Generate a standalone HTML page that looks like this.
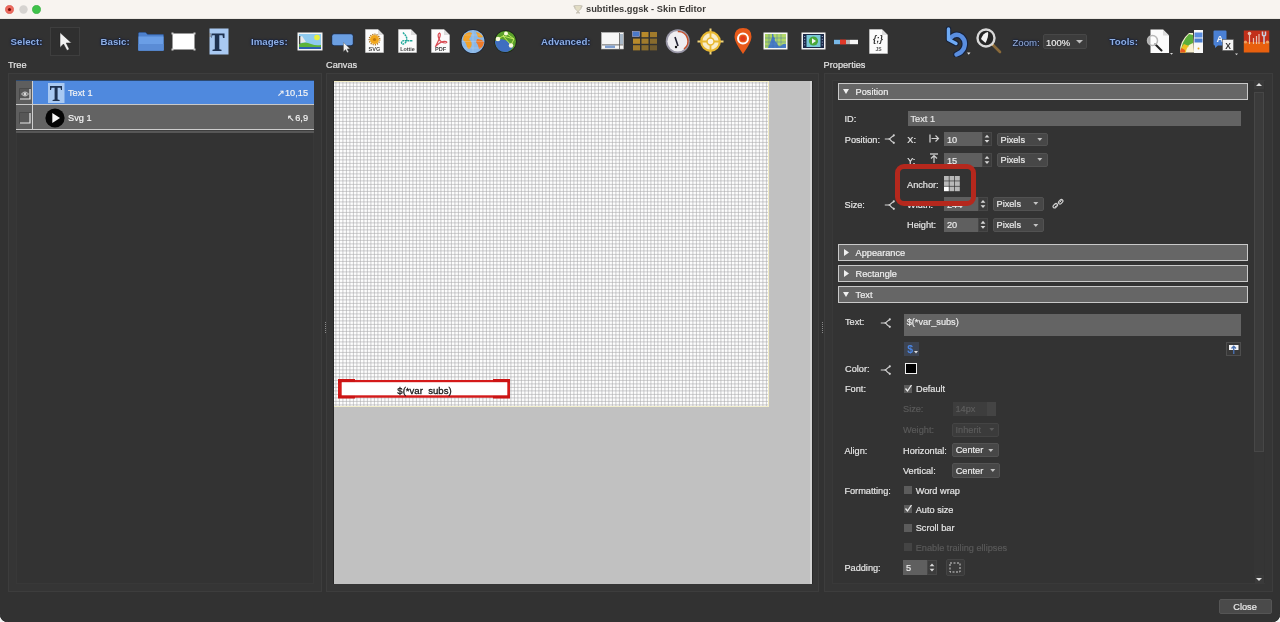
<!DOCTYPE html>
<html><head><meta charset="utf-8"><style>
html,body{margin:0;padding:0;}
body{width:1280px;height:622px;overflow:hidden;position:relative;background:#323232;font-family:"Liberation Sans", sans-serif;}
div.n{-webkit-text-stroke:0.18px currentColor;}
</style></head><body><div style="position:absolute;left:0;top:0;width:1280px;height:622px;will-change:transform;">
<div style="position:absolute;left:0px;top:0px;width:1280px;height:19px;background:#f8f4f0"></div>
<svg style="position:absolute;left:5px;top:5px" width="9" height="9" viewBox="0 0 9 9"><circle cx="4.5" cy="4.5" r="4.2" fill="#ed6a5e" stroke="#d9544a" stroke-width="0.5"/><circle cx="4.5" cy="4.5" r="1.6" fill="#7a0c08"/></svg>
<svg style="position:absolute;left:18.5px;top:5px" width="9" height="9" viewBox="0 0 9 9"><circle cx="4.5" cy="4.5" r="4.2" fill="#d6d3d0"/></svg>
<svg style="position:absolute;left:32px;top:5px" width="9" height="9" viewBox="0 0 9 9"><circle cx="4.5" cy="4.5" r="4.2" fill="#3fc24a" stroke="#2ea83a" stroke-width="0.5"/></svg>
<svg style="position:absolute;left:572px;top:4px" width="12" height="10" viewBox="0 0 12 10"><path d="M2.5 1.5 L9.5 1.5 L9 4.5 Q8 6.5 6.5 6.8 L6.5 8.5 L8 9 L4 9 L5.5 8.5 L5.5 6.8 Q4 6.5 3 4.5 Z" fill="#e2dcc4" stroke="#b8b4a8" stroke-width="0.6"/><path d="M1 2 L2.5 2.5 L3 4.5 M11 2 L9.5 2.5 L9 4.5" stroke="#b8b4a8" stroke-width="0.6" fill="none"/></svg>
<div style="position:absolute;left:0px;top:17.5px;width:1280px;height:1.5px;background:#ebe7e2"></div>
<div style="position:absolute;left:586px;top:5.43px;font-size:9.3px;line-height:9.3px;color:#3c3a38;font-weight:bold;white-space:nowrap;">subtitles.ggsk - Skin Editor</div>
<div style="position:absolute;left:10.6px;top:37.49px;font-size:9.7px;line-height:9.7px;color:#8eaee2;font-weight:bold;white-space:nowrap;text-shadow:0 0 1px #0a1c46,0 0 1.5px #0a1c46,0 0 2.5px #0a1c46;">Select:</div>
<div style="position:absolute;left:50px;top:27px;width:30px;height:29px;box-sizing:border-box;border:1px solid #3e3e3e;background:#2f2f2f"></div>
<svg style="position:absolute;left:58px;top:31px" width="16" height="21" viewBox="0 0 16 21"><path d="M2 1.5 L2 16.5 L5.5 13 L9 19.5 L11.3 18.3 L8.2 12 L13.5 12 Z" fill="#f2f2f2" stroke="#222" stroke-width="0.5"/></svg>
<div style="position:absolute;left:100.6px;top:37.49px;font-size:9.7px;line-height:9.7px;color:#8eaee2;font-weight:bold;white-space:nowrap;text-shadow:0 0 1px #0a1c46,0 0 1.5px #0a1c46,0 0 2.5px #0a1c46;">Basic:</div>
<div style="position:absolute;left:251px;top:37.49px;font-size:9.7px;line-height:9.7px;color:#8eaee2;font-weight:bold;white-space:nowrap;text-shadow:0 0 1px #0a1c46,0 0 1.5px #0a1c46,0 0 2.5px #0a1c46;">Images:</div>
<div style="position:absolute;left:541px;top:37.49px;font-size:9.7px;line-height:9.7px;color:#8eaee2;font-weight:bold;white-space:nowrap;text-shadow:0 0 1px #0a1c46,0 0 1.5px #0a1c46,0 0 2.5px #0a1c46;">Advanced:</div>
<div style="position:absolute;left:1012.5px;top:37.67px;font-size:9.6px;line-height:9.6px;color:#9cb2da;font-weight:bold;white-space:nowrap;font-weight:normal;text-shadow:0 0 1px #0a1c46,0 0 1.5px #0a1c46,0 0 2.5px #0a1c46;">Zoom:</div>
<div style="position:absolute;left:1109.6px;top:37.49px;font-size:9.7px;line-height:9.7px;color:#8eaee2;font-weight:bold;white-space:nowrap;text-shadow:0 0 1px #0a1c46,0 0 1.5px #0a1c46,0 0 2.5px #0a1c46;">Tools:</div>
<svg style="position:absolute;left:137px;top:31px" width="28" height="21" viewBox="0 0 28 21"><path d="M1 2 Q1 1 2 1 L9 1 L11 3 L26 3 Q27 3 27 4 L27 20 L1 20 Z" fill="#1f3557"/><path d="M1.5 2.5 Q1.5 1.5 2.5 1.5 L8.5 1.5 L10.5 3.5 L26.5 3.5 L26.5 19.5 L1.5 19.5 Z" fill="#4d80cc"/><rect x="1.5" y="5.5" width="25" height="14" fill="#6a9ee6"/><rect x="1.5" y="13" width="25" height="6.5" fill="#5a8cd6"/></svg>
<svg style="position:absolute;left:171px;top:32px" width="25" height="19" viewBox="0 0 25 19"><rect x="1.5" y="1.5" width="22" height="16" fill="#ffffff"/><rect x="0.5" y="0.5" width="2" height="2" fill="#cfcfcf"/><rect x="22.5" y="0.5" width="2" height="2" fill="#cfcfcf"/><rect x="0.5" y="16.5" width="2" height="2" fill="#cfcfcf"/><rect x="22.5" y="16.5" width="2" height="2" fill="#cfcfcf"/></svg>
<svg style="position:absolute;left:209px;top:28px" width="20" height="27" viewBox="0 0 20 27"><rect x="0.5" y="0.5" width="19" height="26" fill="#a9c9f2"/><path d="M2.5 5.5 L15.5 5.5 L15.5 10 L14 10 L13.5 7.3 L10.3 7.3 L10.3 21.3 L12.5 21.8 L12.5 23 L3.5 23 L3.5 21.8 L5.8 21.3 L5.8 7.3 L3.3 7.3 L2.8 10 L2.5 10 Z" fill="#1e3150"/><rect x="0" y="5" width="1.5" height="4" fill="#777"/></svg>
<svg style="position:absolute;left:297px;top:32px" width="26" height="19" viewBox="0 0 26 19"><rect x="0.5" y="0.5" width="25" height="18" fill="#f4f4f4"/><rect x="2" y="2" width="22" height="15" fill="#8fcbef"/><circle cx="20" cy="5.5" r="2.8" fill="#e8f03c"/><path d="M2 12 Q8 9 14 12 Q19 14 24 13 L24 17 L2 17 Z" fill="#5cb33a"/><path d="M2 15 L24 15 L24 17 L2 17 Z" fill="#2d5fb0"/><path d="M3 5 L5 4 L9 10 L3 11 Z" fill="#eaeaea"/><rect x="2" y="4" width="1.3" height="8" fill="#444"/></svg>
<svg style="position:absolute;left:331px;top:33px" width="26" height="20" viewBox="0 0 26 20"><rect x="0.5" y="0.5" width="22" height="12.5" rx="2.5" fill="#1d2f50"/><rect x="1.2" y="1.2" width="20.6" height="11" rx="2" fill="#6b9fe2"/><path d="M12.5 9.5 L12.5 18.5 L14.6 16.6 L16.2 19.6 L17.6 18.9 L16.1 15.9 L19 15.8 Z" fill="#f2f2f2" stroke="#555" stroke-width="0.4"/></svg>
<svg style="position:absolute;left:365px;top:29px" width="19" height="24" viewBox="0 0 19 24"><path d="M0.5 0.5 L13 0.5 L18.5 6 L18.5 23.5 L0.5 23.5 Z" fill="#fbfbfb" stroke="#ddd" stroke-width="0.5"/><path d="M13 0.5 L13 6 L18.5 6 Z" fill="#dcdcdc"/><circle cx="9.5" cy="10.5" r="4.5" fill="#f2a81e"/><circle cx="9.5" cy="10.5" r="5.3" fill="none" stroke="#a86a10" stroke-width="1.2" stroke-dasharray="1.2 1"/><circle cx="9.5" cy="10.5" r="1.6" fill="#c07810"/><text x="9.5" y="21.5" font-size="5.6" font-family="Liberation Sans" font-weight="bold" text-anchor="middle" fill="#444">SVG</text></svg>
<svg style="position:absolute;left:398px;top:29px" width="19" height="24" viewBox="0 0 19 24"><path d="M0.5 0.5 L13 0.5 L18.5 6 L18.5 23.5 L0.5 23.5 Z" fill="#fbfbfb" stroke="#ddd" stroke-width="0.5"/><path d="M13 0.5 L13 6 L18.5 6 Z" fill="#dcdcdc"/><path d="M5 3.5 L8 7 Q10 11 7 14 Q4 16.5 3.5 13.5 Q4 11 8.5 11.8 L15 11.8" stroke="#1fa89a" stroke-width="1.4" fill="none" stroke-dasharray="2 0.6"/><text x="9.5" y="21.5" font-size="5.4" font-family="Liberation Sans" font-weight="bold" text-anchor="middle" fill="#444">Lottie</text></svg>
<svg style="position:absolute;left:431px;top:29px" width="19" height="24" viewBox="0 0 19 24"><path d="M0.5 0.5 L13 0.5 L18.5 6 L18.5 23.5 L0.5 23.5 Z" fill="#fbfbfb" stroke="#ddd" stroke-width="0.5"/><path d="M13 0.5 L13 6 L18.5 6 Z" fill="#dcdcdc"/><path d="M8.5 4 Q6 5 8 10 Q10 14 14.5 14 Q17 13.5 15 12.5 Q11 11.5 6 16 Q3.5 18.5 5 16.5 Q7 13 8.5 9 Q10 5 8.5 4 Z" stroke="#d94a52" stroke-width="1.2" fill="none"/><text x="9.5" y="21.5" font-size="5.6" font-family="Liberation Sans" font-weight="bold" text-anchor="middle" fill="#444">PDF</text></svg>
<svg style="position:absolute;left:460px;top:29px" width="26" height="26" viewBox="0 0 26 26"><circle cx="13" cy="12.5" r="12.3" fill="#1a2030"/><circle cx="13" cy="12.5" r="11.5" fill="#8ab8e8"/><path d="M4 6 Q8 2 12 4 Q11 8 9 10 Q13 13 11 18 Q9 22 7 18 Q6 13 3 11 Z" fill="#f2a22a"/><path d="M16 3 Q21 4 23 8 Q20 9 18 8 Q17 6 16 3 Z" fill="#f2a22a"/><path d="M17 10 Q22 10 24 13 Q23 19 19 20 Q18 15 16 13 Z" fill="#ee7a2a"/><path d="M13 1 L13 24 M2 12.5 L24 12.5 M4 6 L22 6 M4 19 L22 19" stroke="#c8d8f0" stroke-width="0.5" opacity="0.6"/></svg>
<svg style="position:absolute;left:494px;top:30px" width="24" height="24" viewBox="0 0 24 24"><circle cx="11.5" cy="11.5" r="11.2" fill="#1a2218"/><circle cx="11.5" cy="11.5" r="10.5" fill="#5aa02a"/><path d="M1 11 Q6 8 11 10 Q16 12 19 17 Q16 22 11.5 22 Q3 22 1 13 Z" fill="#3f6ec0"/><path d="M2 10 L9 6 L20 9 M9 6 L12 3 M9 6 L17 15 L20 9 M12 3 L20 9" stroke="#c8f060" stroke-width="0.9" fill="none"/><circle cx="12" cy="3.5" r="2" fill="#fafadc"/><circle cx="4" cy="9" r="2.3" fill="#fafadc"/><circle cx="17" cy="15.5" r="2.2" fill="#fafadc"/></svg>
<svg style="position:absolute;left:601px;top:32px" width="23" height="18" viewBox="0 0 23 18"><rect x="0.5" y="0.5" width="22" height="16.5" fill="#f6f6f6" stroke="#bbb" stroke-width="0.6"/><rect x="1" y="12.5" width="21" height="0.8" fill="#444"/><rect x="18" y="1" width="0.8" height="16" fill="#555"/><rect x="19" y="2" width="3" height="10" fill="#a8b8c8"/><rect x="4" y="13.5" width="10" height="2.5" fill="#7f9fd0"/></svg>
<svg style="position:absolute;left:632px;top:31px" width="26" height="20" viewBox="0 0 26 20"><rect x="0.5" y="0.5" width="7" height="5" fill="#4a78c8" stroke="#aac" stroke-width="0.6"/><rect x="9.5" y="1.0" width="7" height="5.2" fill="#d09a2a" opacity="0.85"/><rect x="18.0" y="1.0" width="7" height="5.2" fill="#d09a2a" opacity="0.70"/><rect x="1.0" y="7.6" width="7" height="5.2" fill="#d09a2a" opacity="0.85"/><rect x="9.5" y="7.6" width="7" height="5.2" fill="#d09a2a" opacity="0.70"/><rect x="18.0" y="7.6" width="7" height="5.2" fill="#d09a2a" opacity="0.55"/><rect x="1.0" y="14.2" width="7" height="5.2" fill="#d09a2a" opacity="0.70"/><rect x="9.5" y="14.2" width="7" height="5.2" fill="#d09a2a" opacity="0.55"/><rect x="18.0" y="14.2" width="7" height="5.2" fill="#d09a2a" opacity="0.40"/></svg>
<svg style="position:absolute;left:665px;top:29px" width="26" height="26" viewBox="0 0 26 26"><circle cx="12.75" cy="12.25" r="12" fill="#9a98a8"/><circle cx="12.75" cy="12.25" r="10.3" fill="#efeef2"/><path d="M12.75 2.5 A9.7 9.7 0 0 1 19 20" stroke="#c8502a" stroke-width="1.5" fill="none"/><path d="M10 8 L13 17" stroke="#223" stroke-width="1.6"/><circle cx="11" cy="18" r="1.2" fill="#111"/></svg>
<svg style="position:absolute;left:697px;top:28px" width="27" height="27" viewBox="0 0 27 27"><path d="M13.5 0.5 L13.5 26.5 M0.5 13.5 L26.5 13.5" stroke="#f2d478" stroke-width="2"/><circle cx="13.5" cy="13.5" r="9.3" fill="#f8ecc8" stroke="#e8b830" stroke-width="2.2"/><path d="M13.5 4 L13.5 23 M4 13.5 L23 13.5" stroke="#e8b830" stroke-width="1.8"/><circle cx="13.5" cy="13.5" r="3.5" fill="#fbf2e0" stroke="#e8b830" stroke-width="1.5"/></svg>
<svg style="position:absolute;left:733px;top:27px" width="20" height="28" viewBox="0 0 20 28"><path d="M10 1 Q18.5 1 18.5 10 Q18.5 15 10 27 Q1.5 15 1.5 10 Q1.5 1 10 1 Z" fill="#e85a1a"/><circle cx="10" cy="11.5" r="5" fill="none" stroke="#fdfdfd" stroke-width="2"/><circle cx="10" cy="11.5" r="2.6" fill="#e23a1a"/></svg>
<svg style="position:absolute;left:763px;top:32px" width="25" height="18" viewBox="0 0 25 18"><rect x="0.5" y="0.5" width="24" height="17" fill="#f8f8f8"/><rect x="2" y="2" width="21" height="14" fill="#4a7ec4"/><path d="M2 2 L9 2 Q10 5 8 8 Q7 12 5 16 L2 16 Z" fill="#a8d060"/><path d="M10 2 L23 2 L23 12 Q20 11 18 14 Q15 15 14 11 Q11 9 12 6 Q10 5 10 2 Z" fill="#b2d868"/><path d="M2 6 L23 6 M2 10 L23 10 M2 14 L23 14 M6 2 L6 16 M10 2 L10 16 M14 2 L14 16 M18 2 L18 16" stroke="#3a6ab8" stroke-width="0.6" opacity="0.7"/></svg>
<svg style="position:absolute;left:801px;top:32px" width="25" height="18" viewBox="0 0 25 18"><rect x="0.5" y="0.5" width="24" height="17" fill="#f4f4f4"/><rect x="2" y="2" width="21" height="14" fill="#1c2a48"/><rect x="5.5" y="3" width="14" height="12" fill="#7ac8d8"/><circle cx="12.5" cy="9" r="4.6" fill="#4aa83a"/><path d="M11 6.3 L15 9 L11 11.7 Z" fill="#f6f6f6"/><path d="M3.7 4 L3.7 15 M21.3 4 L21.3 15" stroke="#a8b8e0" stroke-width="1" stroke-dasharray="1 1.8"/></svg>
<svg style="position:absolute;left:833px;top:39px" width="26" height="6" viewBox="0 0 26 6"><rect x="1" y="0.8" width="6" height="4.4" fill="#78b8e8"/><rect x="7" y="0.5" width="6" height="5" fill="#e03828"/><rect x="13" y="0.8" width="4" height="4.4" fill="#b8b8b8"/><rect x="17" y="0.8" width="8" height="4.4" fill="#f6f6f6"/></svg>
<svg style="position:absolute;left:869px;top:29px" width="19" height="25" viewBox="0 0 19 25"><path d="M0.5 0.5 L13 0.5 L18.5 6 L18.5 24.5 L0.5 24.5 Z" fill="#fbfbfb" stroke="#ddd" stroke-width="0.5"/><path d="M13 0.5 L13 6 L18.5 6 Z" fill="#dcdcdc"/><text x="9" y="13" font-size="9" font-family="Liberation Sans" font-weight="bold" font-style="italic" text-anchor="middle" fill="#333">{;}</text><text x="9.5" y="21.5" font-size="5" font-family="Liberation Sans" font-weight="bold" text-anchor="middle" fill="#555">JS</text></svg>
<svg style="position:absolute;left:944px;top:26px" width="30" height="31" viewBox="0 0 30 31"><path d="M6.5 12 Q12 6.5 17.5 10.5 Q22.5 15 20 22 Q18 26.5 12.5 28.5" stroke="#15213a" stroke-width="6.6" fill="none" stroke-linecap="round"/><path d="M4.5 3 L4.5 13.5 L12 17.5" stroke="#15213a" stroke-width="5.4" fill="none" stroke-linecap="round" stroke-linejoin="round"/><path d="M6.5 12 Q12 6.5 17.5 10.5 Q22.5 15 20 22 Q18 26.5 12.5 28.5" stroke="#5a8ee0" stroke-width="4.4" fill="none" stroke-linecap="round"/><path d="M4.5 3 L4.5 13.5 L12 17.5" stroke="#6eaaf4" stroke-width="3.4" fill="none" stroke-linecap="round" stroke-linejoin="round"/><path d="M23 26.5 L26.5 26.5 L24.75 28.8 Z" fill="#e0e0e0"/></svg>
<svg style="position:absolute;left:975px;top:27px" width="30" height="28" viewBox="0 0 30 28"><path d="M16.5 16.5 L25 25" stroke="#8a6a3a" stroke-width="2.6" stroke-linecap="round"/><path d="M15.5 15.5 L18 18" stroke="#e8c890" stroke-width="2.5"/><circle cx="11" cy="11" r="8.5" fill="#262626" stroke="#d8d8d8" stroke-width="2.4"/><path d="M6 12 Q8 6 13 5 Q14 9 10.5 16 Z" fill="#f4f4f4"/></svg>
<div style="position:absolute;left:1043px;top:34px;width:44px;height:15px;box-sizing:border-box;border:1px solid #474747;background:#3c3c3c;border-radius:2px"></div>
<div class="n" style="position:absolute;left:1046px;top:38.14px;font-size:9.4px;line-height:9.4px;color:#ececec;font-weight:normal;white-space:nowrap;">100%</div>
<svg style="position:absolute;left:1076px;top:40px" width="7" height="4" viewBox="0 0 7 4"><path d="M0 0 L7 0 L3.5 3.5 Z" fill="#bdbdbd"/></svg>
<svg style="position:absolute;left:1145px;top:29px" width="28" height="26" viewBox="0 0 28 26"><path d="M5.5 0.5 L18 0.5 L24 6.5 L24 24 L5.5 24 Z" fill="#fbfbfb"/><path d="M18 0.5 L18 6.5 L24 6.5 Z" fill="#dcdcdc"/><path d="M10 15 L16.5 21.5" stroke="#222" stroke-width="2" stroke-linecap="round"/><circle cx="7.5" cy="11.5" r="5" fill="rgba(255,255,255,0.6)" stroke="#b8b8b8" stroke-width="1.5"/><path d="M25 24 L28 24 L26.5 25.8 Z" fill="#d8d8d8"/></svg>
<svg style="position:absolute;left:1179px;top:29px" width="25" height="25" viewBox="0 0 25 25"><rect x="15" y="1" width="9" height="23" fill="#f8f8f8"/><rect x="15.5" y="3.5" width="8" height="5" fill="#5a8ee0"/><rect x="15.5" y="9.5" width="8" height="4" fill="#4a7ed0"/><circle cx="19.5" cy="19.5" r="1" fill="#e8a020"/><path d="M1 23.5 Q0.5 12 10 4 L14 4 L15 23.5 Z" fill="#f8f0d0"/><path d="M2 23.5 Q2 13 10 5 L14 6 L14 14 Q6 17 6 23.5 Z" fill="#5cae3a"/><path d="M1.5 23.5 Q2 18 5 15 L10 17 Q7 19 7 23.5 Z" fill="#f0c020"/><path d="M1 23.5 Q1 21 2.5 19 L6 21 L6 23.5 Z" fill="#e85a20"/></svg>
<svg style="position:absolute;left:1212px;top:30px" width="27" height="26" viewBox="0 0 27 26"><path d="M1.5 1.5 Q1.5 0.5 2.5 0.5 L13.5 0.5 Q14.5 0.5 14.5 1.5 L14.5 14 Q14.5 15.5 13 15.5 L6 15.5 L3 18 L3 15.5 Q1.5 15.5 1.5 14 Z" fill="#4a80d4"/><text x="8" y="11.5" font-size="9.5" font-family="Liberation Sans" font-weight="bold" text-anchor="middle" fill="#f4f4f4">A</text><rect x="10.5" y="9.5" width="11" height="11" fill="#f4f4f4" stroke="#555" stroke-width="0.6"/><text x="16" y="19" font-size="8.5" font-family="Liberation Sans" font-weight="bold" text-anchor="middle" fill="#333">X</text><path d="M23 23.5 L26 23.5 L24.5 25.3 Z" fill="#d8d8d8"/></svg>
<svg style="position:absolute;left:1243px;top:30px" width="27" height="23" viewBox="0 0 27 23"><rect x="0.8" y="0.5" width="25.5" height="12" fill="#c2301a"/><rect x="0.8" y="12" width="25.5" height="10.5" fill="#e8600e"/><path d="M6.5 3 L6.5 14 M10.5 8 L10.5 14 M13.5 6 L13.5 14 M16 4 L16 14" stroke="#e8c0b0" stroke-width="1.2"/><circle cx="6.5" cy="3.5" r="1.8" fill="#e8c0b0"/><path d="M19.5 1.5 L19.5 5 Q21 7 22.5 5 L22.5 1.5 M21 6 L21 14" stroke="#c8d0e0" stroke-width="1.5" fill="none"/><circle cx="2.5" cy="12" r="1.6" fill="#f0a060"/><circle cx="24.5" cy="12" r="1.6" fill="#f0a060"/></svg>
<div class="n" style="position:absolute;left:8px;top:61.21px;font-size:9.2px;line-height:9.2px;color:#e6e6e6;font-weight:normal;white-space:nowrap;">Tree</div>
<div class="n" style="position:absolute;left:326px;top:61.21px;font-size:9.2px;line-height:9.2px;color:#e6e6e6;font-weight:normal;white-space:nowrap;">Canvas</div>
<div class="n" style="position:absolute;left:823.6px;top:61.21px;font-size:9.2px;line-height:9.2px;color:#e6e6e6;font-weight:normal;white-space:nowrap;">Properties</div>
<div style="position:absolute;left:8px;top:73px;width:314px;height:519px;box-sizing:border-box;border:1px solid #3d3d3d;background:#353535;"></div>
<div style="position:absolute;left:326px;top:73px;width:493px;height:519px;box-sizing:border-box;border:1px solid #3d3d3d;background:#353535;"></div>
<div style="position:absolute;left:824px;top:73px;width:449px;height:519px;box-sizing:border-box;border:1px solid #3d3d3d;background:#353535;"></div>
<div style="position:absolute;left:16px;top:80px;width:298px;height:504px;box-sizing:border-box;border:1px solid #383838;background:#333333"></div>
<div style="position:absolute;left:832px;top:80px;width:433px;height:504px;box-sizing:border-box;border:1px solid #393939;border-right:none;background:#333333"></div>
<div style="position:absolute;left:16px;top:80px;width:298px;height:1px;background:#2c4a72"></div>
<div style="position:absolute;left:16px;top:81px;width:298px;height:23px;background:#4f89de"></div>
<div style="position:absolute;left:16px;top:81px;width:16px;height:23px;background:#5e5e5e"></div>
<div style="position:absolute;left:16px;top:105px;width:298px;height:24px;background:#636363"></div>
<div style="position:absolute;left:16px;top:105px;width:16px;height:24px;background:#5e5e5e"></div>
<div style="position:absolute;left:16px;top:104px;width:298px;height:1px;background:#c9c9c9"></div>
<div style="position:absolute;left:16px;top:129px;width:298px;height:1px;background:#cdcdcd"></div>
<div style="position:absolute;left:16px;top:130px;width:298px;height:1px;background:#3e3e3e"></div>
<div style="position:absolute;left:16px;top:131px;width:298px;height:2px;background:#575757"></div>
<div style="position:absolute;left:32px;top:81px;width:1px;height:48px;background:#d0d0d0"></div>
<div class="n" style="position:absolute;left:68px;top:89.41px;font-size:9.2px;line-height:9.2px;color:#f4f4f4;font-weight:normal;white-space:nowrap;">Text 1</div>
<div class="n" style="position:absolute;right:972px;top:89.41px;font-size:9.2px;line-height:9.2px;color:#f4f4f4;font-weight:normal;white-space:nowrap;">&#8599;10,15</div>
<div class="n" style="position:absolute;left:68px;top:113.61px;font-size:9.2px;line-height:9.2px;color:#f4f4f4;font-weight:normal;white-space:nowrap;">Svg 1</div>
<div class="n" style="position:absolute;right:972px;top:113.61px;font-size:9.2px;line-height:9.2px;color:#f4f4f4;font-weight:normal;white-space:nowrap;">&#8598;6,9</div>
<svg style="position:absolute;left:18.5px;top:87.5px" width="12" height="12" viewBox="0 0 12 12"><rect x="0.5" y="0.5" width="11" height="11" fill="#575757"/><path d="M0.5 11.5 L0.5 0.5 L11.5 0.5" stroke="#4a4a4a" stroke-width="1" fill="none"/><path d="M1 11 L11 11 L11 1" stroke="#e8e8e8" stroke-width="1.2" fill="none"/><path d="M2.5 6 Q6 2 9.5 6 Q6 10 2.5 6 Z" fill="none" stroke="#d8d8d8" stroke-width="0.9"/><circle cx="6" cy="6" r="1.5" fill="#d8d8d8"/></svg>
<svg style="position:absolute;left:18.5px;top:111.5px" width="12" height="12" viewBox="0 0 12 12"><rect x="0.5" y="0.5" width="11" height="11" fill="#575757"/><path d="M0.5 11.5 L0.5 0.5 L11.5 0.5" stroke="#4a4a4a" stroke-width="1" fill="none"/><path d="M1 11 L11 11 L11 1" stroke="#e8e8e8" stroke-width="1.2" fill="none"/></svg>
<svg style="position:absolute;left:48px;top:83px" width="17" height="20" viewBox="0 0 17 20"><rect x="0" y="0" width="16.5" height="20" fill="#a9c9f2"/><path d="M2 3 L14 3 L14 7 L13 7 L12.5 4.8 L9.6 4.8 L9.6 16.5 L11.6 17 L11.6 18 L4.6 18 L4.6 17 L6.6 16.5 L6.6 4.8 L3.5 4.8 L3 7 L2 7 Z" fill="#1e3150"/></svg>
<svg style="position:absolute;left:45px;top:108px" width="20" height="20" viewBox="0 0 20 20"><circle cx="10" cy="10" r="9.6" fill="#050505"/><path d="M7.3 5 L15 10 L7.3 15 Z" fill="#f8f8f8"/></svg>
<div style="position:absolute;left:333px;top:81px;width:1px;height:503px;background:#262626"></div>
<div style="position:absolute;left:812px;top:81px;width:1px;height:503px;background:#282828"></div>
<div style="position:absolute;left:334px;top:81px;width:478px;height:503px;background:#c1c1c1"></div>
<div style="position:absolute;left:810px;top:81px;width:1.8px;height:503px;background:#d2d2d2"></div>
<svg style="position:absolute;left:334px;top:81px" width="435" height="326" viewBox="0 0 435 326"><rect width="435" height="326" fill="#fdfdfd"/><path d="M1.90 0V326M5.40 0V326M8.90 0V326M12.40 0V326M15.90 0V326M19.40 0V326M22.90 0V326M26.40 0V326M29.90 0V326M33.40 0V326M36.90 0V326M40.40 0V326M43.90 0V326M47.40 0V326M50.90 0V326M54.40 0V326M57.90 0V326M61.40 0V326M64.90 0V326M68.40 0V326M71.90 0V326M75.40 0V326M78.90 0V326M82.40 0V326M85.90 0V326M89.40 0V326M92.90 0V326M96.40 0V326M99.90 0V326M103.40 0V326M106.90 0V326M110.40 0V326M113.90 0V326M117.40 0V326M120.90 0V326M124.40 0V326M127.90 0V326M131.40 0V326M134.90 0V326M138.40 0V326M141.90 0V326M145.40 0V326M148.90 0V326M152.40 0V326M155.90 0V326M159.40 0V326M162.90 0V326M166.40 0V326M169.90 0V326M173.40 0V326M176.90 0V326M180.40 0V326M183.90 0V326M187.40 0V326M190.90 0V326M194.40 0V326M197.90 0V326M201.40 0V326M204.90 0V326M208.40 0V326M211.90 0V326M215.40 0V326M218.90 0V326M222.40 0V326M225.90 0V326M229.40 0V326M232.90 0V326M236.40 0V326M239.90 0V326M243.40 0V326M246.90 0V326M250.40 0V326M253.90 0V326M257.40 0V326M260.90 0V326M264.40 0V326M267.90 0V326M271.40 0V326M274.90 0V326M278.40 0V326M281.90 0V326M285.40 0V326M288.90 0V326M292.40 0V326M295.90 0V326M299.40 0V326M302.90 0V326M306.40 0V326M309.90 0V326M313.40 0V326M316.90 0V326M320.40 0V326M323.90 0V326M327.40 0V326M330.90 0V326M334.40 0V326M337.90 0V326M341.40 0V326M344.90 0V326M348.40 0V326M351.90 0V326M355.40 0V326M358.90 0V326M362.40 0V326M365.90 0V326M369.40 0V326M372.90 0V326M376.40 0V326M379.90 0V326M383.40 0V326M386.90 0V326M390.40 0V326M393.90 0V326M397.40 0V326M400.90 0V326M404.40 0V326M407.90 0V326M411.40 0V326M414.90 0V326M418.40 0V326M421.90 0V326M425.40 0V326M428.90 0V326M432.40 0V326M0 1.90H435M0 5.40H435M0 8.90H435M0 12.40H435M0 15.90H435M0 19.40H435M0 22.90H435M0 26.40H435M0 29.90H435M0 33.40H435M0 36.90H435M0 40.40H435M0 43.90H435M0 47.40H435M0 50.90H435M0 54.40H435M0 57.90H435M0 61.40H435M0 64.90H435M0 68.40H435M0 71.90H435M0 75.40H435M0 78.90H435M0 82.40H435M0 85.90H435M0 89.40H435M0 92.90H435M0 96.40H435M0 99.90H435M0 103.40H435M0 106.90H435M0 110.40H435M0 113.90H435M0 117.40H435M0 120.90H435M0 124.40H435M0 127.90H435M0 131.40H435M0 134.90H435M0 138.40H435M0 141.90H435M0 145.40H435M0 148.90H435M0 152.40H435M0 155.90H435M0 159.40H435M0 162.90H435M0 166.40H435M0 169.90H435M0 173.40H435M0 176.90H435M0 180.40H435M0 183.90H435M0 187.40H435M0 190.90H435M0 194.40H435M0 197.90H435M0 201.40H435M0 204.90H435M0 208.40H435M0 211.90H435M0 215.40H435M0 218.90H435M0 222.40H435M0 225.90H435M0 229.40H435M0 232.90H435M0 236.40H435M0 239.90H435M0 243.40H435M0 246.90H435M0 250.40H435M0 253.90H435M0 257.40H435M0 260.90H435M0 264.40H435M0 267.90H435M0 271.40H435M0 274.90H435M0 278.40H435M0 281.90H435M0 285.40H435M0 288.90H435M0 292.40H435M0 295.90H435M0 299.40H435M0 302.90H435M0 306.40H435M0 309.90H435M0 313.40H435M0 316.90H435M0 320.40H435M0 323.90H435" stroke="#a9a9ab" stroke-width="0.6" fill="none"/><path d="M0 0.5H434.5V325.5" stroke="#f3edc4" stroke-width="1" fill="none"/><path d="M0 325.5H435" stroke="#f3efcc" stroke-width="1"/></svg>
<svg style="position:absolute;left:337px;top:378px" width="174" height="22" viewBox="0 0 174 22"><rect x="1" y="2" width="172" height="17.7" fill="#d41a1a"/><rect x="1" y="1" width="17" height="4" fill="#cc1414"/><rect x="156" y="1" width="17" height="4" fill="#cc1414"/><rect x="1" y="16.5" width="17" height="4" fill="#cc1414"/><rect x="156" y="16.5" width="17" height="4" fill="#cc1414"/><rect x="4.7" y="4.2" width="165.6" height="13.1" fill="#ffffff"/></svg>
<div class="n" style="position:absolute;left:224.5px;width:400px;text-align:center;top:385.67px;font-size:9.6px;line-height:9.6px;color:#151515;font-weight:normal;white-space:nowrap;-webkit-text-stroke:0.3px #151515;">$(*var&nbsp;&nbsp;subs)</div>
<div style="position:absolute;left:838px;top:83px;width:410px;height:17px;box-sizing:border-box;border:1px solid #c9c9c9;background:#666666"></div>
<svg style="position:absolute;left:843px;top:89px" width="6" height="5" viewBox="0 0 6 5"><path d="M0 0 L6 0 L3 5 Z" fill="#f0f0f0"/></svg>
<div class="n" style="position:absolute;left:855.6px;top:87.81px;font-size:9.2px;line-height:9.2px;color:#f0f0f0;font-weight:normal;white-space:nowrap;">Position</div>
<div style="position:absolute;left:838px;top:244px;width:410px;height:17px;box-sizing:border-box;border:1px solid #c9c9c9;background:#666666"></div>
<svg style="position:absolute;left:844px;top:249px" width="5" height="7" viewBox="0 0 5 7"><path d="M0 0 L5 3.5 L0 7 Z" fill="#f0f0f0"/></svg>
<div class="n" style="position:absolute;left:855.6px;top:248.81px;font-size:9.2px;line-height:9.2px;color:#f0f0f0;font-weight:normal;white-space:nowrap;">Appearance</div>
<div style="position:absolute;left:838px;top:265px;width:410px;height:17px;box-sizing:border-box;border:1px solid #c9c9c9;background:#666666"></div>
<svg style="position:absolute;left:844px;top:270px" width="5" height="7" viewBox="0 0 5 7"><path d="M0 0 L5 3.5 L0 7 Z" fill="#f0f0f0"/></svg>
<div class="n" style="position:absolute;left:855.6px;top:269.81px;font-size:9.2px;line-height:9.2px;color:#f0f0f0;font-weight:normal;white-space:nowrap;">Rectangle</div>
<div style="position:absolute;left:838px;top:286px;width:410px;height:17px;box-sizing:border-box;border:1px solid #c9c9c9;background:#666666"></div>
<svg style="position:absolute;left:843px;top:292px" width="6" height="5" viewBox="0 0 6 5"><path d="M0 0 L6 0 L3 5 Z" fill="#f0f0f0"/></svg>
<div class="n" style="position:absolute;left:855.6px;top:290.81px;font-size:9.2px;line-height:9.2px;color:#f0f0f0;font-weight:normal;white-space:nowrap;">Text</div>
<div class="n" style="position:absolute;left:844.5px;top:115.01px;font-size:9.2px;line-height:9.2px;color:#e6e6e6;font-weight:normal;white-space:nowrap;">ID:</div>
<div style="position:absolute;left:907.5px;top:111px;width:333.5px;height:14.5px;background:#636363"></div>
<div class="n" style="position:absolute;left:910.5px;top:115.01px;font-size:9.2px;line-height:9.2px;color:#e8e8e8;font-weight:normal;white-space:nowrap;">Text 1</div>
<div class="n" style="position:absolute;left:844.75px;top:135.51px;font-size:9.2px;line-height:9.2px;color:#e6e6e6;font-weight:normal;white-space:nowrap;">Position:</div>
<svg style="position:absolute;left:884px;top:133px" width="12" height="12" viewBox="0 0 12 12"><path d="M0.8 6 L4.5 6 Q6 6 7.5 4.2 Q8.6 2.8 9.8 2.8" stroke="#d4d4d4" stroke-width="1.2" fill="none"/><path d="M4.5 6 Q6 6 7.5 8.2 Q8.6 9.3 9.8 9.3" stroke="#d4d4d4" stroke-width="1.2" fill="none"/><circle cx="9.8" cy="2.3" r="1.1" fill="#d4d4d4"/><circle cx="9.8" cy="9.8" r="1.1" fill="#d4d4d4"/></svg>
<div class="n" style="position:absolute;left:907.25px;top:135.51px;font-size:9.2px;line-height:9.2px;color:#e6e6e6;font-weight:normal;white-space:nowrap;">X:</div>
<svg style="position:absolute;left:928.5px;top:133.5px" width="11" height="9" viewBox="0 0 11 9"><path d="M1 0.5 L1 8.5" stroke="#d0d0d0" stroke-width="1.3"/><path d="M2.5 4.5 L9.5 4.5 M6.5 1.5 L9.5 4.5 L6.5 7.5" stroke="#d0d0d0" stroke-width="1.2" fill="none"/></svg>
<div style="position:absolute;left:944px;top:132px;width:38px;height:13.5px;background:#5f5f5f"></div>
<div class="n" style="position:absolute;left:947px;top:135.51px;font-size:9.2px;line-height:9.2px;color:#ececec;font-weight:normal;white-space:nowrap;">10</div>
<div style="position:absolute;left:982px;top:132px;width:10px;height:13.5px;box-sizing:border-box;border:1px solid #474747;background:#3c3c3c"></div>
<svg style="position:absolute;left:982px;top:132px" width="10" height="13.5" viewBox="0 0 10 13.5"><path d="M2.6 5.55 L5 2.75 L7.4 5.55 Z" fill="#d8d8d8"/><path d="M2.6 7.95 L5 10.75 L7.4 7.95 Z" fill="#d8d8d8"/></svg>
<div style="position:absolute;left:997px;top:132.5px;width:50.5px;height:13.5px;box-sizing:border-box;border:1px solid #525252;background:#474747;border-radius:2px"></div>
<div class="n" style="position:absolute;left:1000.5px;top:135.56px;font-size:9.2px;line-height:9.2px;color:#ececec;font-weight:normal;white-space:nowrap;">Pixels</div>
<svg style="position:absolute;left:1037.0px;top:137.95px" width="6" height="4" viewBox="0 0 6 4"><path d="M0.3 0 L5.3 0 L2.8 3 Z" fill="#c4c4c4"/></svg>
<div class="n" style="position:absolute;left:907.25px;top:156.51px;font-size:9.2px;line-height:9.2px;color:#e6e6e6;font-weight:normal;white-space:nowrap;">Y:</div>
<svg style="position:absolute;left:929px;top:153px" width="10" height="10" viewBox="0 0 10 10"><path d="M1 1 L9 1" stroke="#d0d0d0" stroke-width="1.3"/><path d="M5 2.5 L5 10 M2 5.5 L5 2.5 L8 5.5" stroke="#d0d0d0" stroke-width="1.2" fill="none"/></svg>
<div style="position:absolute;left:944px;top:153px;width:38px;height:14px;background:#5f5f5f"></div>
<div class="n" style="position:absolute;left:947px;top:156.51px;font-size:9.2px;line-height:9.2px;color:#ececec;font-weight:normal;white-space:nowrap;">15</div>
<div style="position:absolute;left:982px;top:153px;width:10px;height:14px;box-sizing:border-box;border:1px solid #474747;background:#3c3c3c"></div>
<svg style="position:absolute;left:982px;top:153px" width="10" height="14" viewBox="0 0 10 14"><path d="M2.6 5.8 L5 3.0 L7.4 5.8 Z" fill="#d8d8d8"/><path d="M2.6 8.2 L5 11.0 L7.4 8.2 Z" fill="#d8d8d8"/></svg>
<div style="position:absolute;left:997px;top:153px;width:50.5px;height:13.5px;box-sizing:border-box;border:1px solid #525252;background:#474747;border-radius:2px"></div>
<div class="n" style="position:absolute;left:1000.5px;top:156.06px;font-size:9.2px;line-height:9.2px;color:#ececec;font-weight:normal;white-space:nowrap;">Pixels</div>
<svg style="position:absolute;left:1037.0px;top:158.45px" width="6" height="4" viewBox="0 0 6 4"><path d="M0.3 0 L5.3 0 L2.8 3 Z" fill="#c4c4c4"/></svg>
<div class="n" style="position:absolute;left:844.5px;top:201.01px;font-size:9.2px;line-height:9.2px;color:#e6e6e6;font-weight:normal;white-space:nowrap;">Size:</div>
<svg style="position:absolute;left:884px;top:198.5px" width="12" height="12" viewBox="0 0 12 12"><path d="M0.8 6 L4.5 6 Q6 6 7.5 4.2 Q8.6 2.8 9.8 2.8" stroke="#d4d4d4" stroke-width="1.2" fill="none"/><path d="M4.5 6 Q6 6 7.5 8.2 Q8.6 9.3 9.8 9.3" stroke="#d4d4d4" stroke-width="1.2" fill="none"/><circle cx="9.8" cy="2.3" r="1.1" fill="#d4d4d4"/><circle cx="9.8" cy="9.8" r="1.1" fill="#d4d4d4"/></svg>
<div class="n" style="position:absolute;left:907px;top:201.01px;font-size:9.2px;line-height:9.2px;color:#e6e6e6;font-weight:normal;white-space:nowrap;">Width:</div>
<div style="position:absolute;left:944px;top:196.5px;width:34px;height:14px;background:#5f5f5f"></div>
<div class="n" style="position:absolute;left:947px;top:200.51px;font-size:9.2px;line-height:9.2px;color:#ececec;font-weight:normal;white-space:nowrap;">244</div>
<div style="position:absolute;left:978px;top:196.5px;width:10px;height:14px;box-sizing:border-box;border:1px solid #474747;background:#3c3c3c"></div>
<svg style="position:absolute;left:978px;top:196.5px" width="10" height="14" viewBox="0 0 10 14"><path d="M2.6 5.8 L5 3.0 L7.4 5.8 Z" fill="#d8d8d8"/><path d="M2.6 8.2 L5 11.0 L7.4 8.2 Z" fill="#d8d8d8"/></svg>
<div style="position:absolute;left:993px;top:196.5px;width:50.5px;height:14px;box-sizing:border-box;border:1px solid #525252;background:#474747;border-radius:2px"></div>
<div class="n" style="position:absolute;left:996.5px;top:199.81px;font-size:9.2px;line-height:9.2px;color:#ececec;font-weight:normal;white-space:nowrap;">Pixels</div>
<svg style="position:absolute;left:1033.0px;top:202.2px" width="6" height="4" viewBox="0 0 6 4"><path d="M0.3 0 L5.3 0 L2.8 3 Z" fill="#c4c4c4"/></svg>
<svg style="position:absolute;left:1052px;top:198px" width="12" height="12" viewBox="0 0 12 12"><path d="M2.5 9.5 L4.5 7.5 M7.5 4.5 L9.5 2.5" stroke="#cfcfcf" stroke-width="1"/><rect x="0.8" y="6.3" width="5" height="3" rx="1.5" transform="rotate(-45 3.3 7.8)" stroke="#cfcfcf" stroke-width="1.2" fill="none"/><rect x="6.2" y="2.3" width="5" height="3" rx="1.5" transform="rotate(-45 8.7 3.8)" stroke="#cfcfcf" stroke-width="1.2" fill="none"/></svg>
<div class="n" style="position:absolute;left:907px;top:221.41px;font-size:9.2px;line-height:9.2px;color:#e6e6e6;font-weight:normal;white-space:nowrap;">Height:</div>
<div style="position:absolute;left:944px;top:218.3px;width:34px;height:13.7px;background:#5f5f5f"></div>
<div class="n" style="position:absolute;left:947px;top:221.41px;font-size:9.2px;line-height:9.2px;color:#ececec;font-weight:normal;white-space:nowrap;">20</div>
<div style="position:absolute;left:978px;top:218.3px;width:10px;height:13.7px;box-sizing:border-box;border:1px solid #474747;background:#3c3c3c"></div>
<svg style="position:absolute;left:978px;top:218.3px" width="10" height="13.7" viewBox="0 0 10 13.7"><path d="M2.6 5.6499999999999995 L5 2.8499999999999996 L7.4 5.6499999999999995 Z" fill="#d8d8d8"/><path d="M2.6 8.049999999999999 L5 10.85 L7.4 8.049999999999999 Z" fill="#d8d8d8"/></svg>
<div style="position:absolute;left:993px;top:218px;width:50.5px;height:14px;box-sizing:border-box;border:1px solid #525252;background:#474747;border-radius:2px"></div>
<div class="n" style="position:absolute;left:996.5px;top:221.31px;font-size:9.2px;line-height:9.2px;color:#ececec;font-weight:normal;white-space:nowrap;">Pixels</div>
<svg style="position:absolute;left:1033.0px;top:223.7px" width="6" height="4" viewBox="0 0 6 4"><path d="M0.3 0 L5.3 0 L2.8 3 Z" fill="#c4c4c4"/></svg>
<div class="n" style="position:absolute;left:907px;top:180.51px;font-size:9.2px;line-height:9.2px;color:#e6e6e6;font-weight:normal;white-space:nowrap;">Anchor:</div>
<svg style="position:absolute;left:943.5px;top:176px" width="16" height="16" viewBox="0 0 16 16"><rect x="0.0" y="0.0" width="4.8" height="4.6" fill="#b9b9b9"/><rect x="5.5" y="0.0" width="4.8" height="4.6" fill="#b9b9b9"/><rect x="11.0" y="0.0" width="4.8" height="4.6" fill="#b9b9b9"/><rect x="0.0" y="5.3" width="4.8" height="4.6" fill="#b9b9b9"/><rect x="5.5" y="5.3" width="4.8" height="4.6" fill="#b9b9b9"/><rect x="11.0" y="5.3" width="4.8" height="4.6" fill="#b9b9b9"/><rect x="0.0" y="10.6" width="4.8" height="4.6" fill="#ffffff"/><rect x="5.5" y="10.6" width="4.8" height="4.6" fill="#b9b9b9"/><rect x="11.0" y="10.6" width="4.8" height="4.6" fill="#b9b9b9"/></svg>
<div style="position:absolute;left:895px;top:163.5px;width:81px;height:42.5px;box-sizing:border-box;border:5px solid #b5281d;border-radius:9px"></div>
<div class="n" style="position:absolute;left:845px;top:318.01px;font-size:9.2px;line-height:9.2px;color:#e6e6e6;font-weight:normal;white-space:nowrap;">Text:</div>
<svg style="position:absolute;left:880px;top:316.5px" width="12" height="12" viewBox="0 0 12 12"><path d="M0.8 6 L4.5 6 Q6 6 7.5 4.2 Q8.6 2.8 9.8 2.8" stroke="#d4d4d4" stroke-width="1.2" fill="none"/><path d="M4.5 6 Q6 6 7.5 8.2 Q8.6 9.3 9.8 9.3" stroke="#d4d4d4" stroke-width="1.2" fill="none"/><circle cx="9.8" cy="2.3" r="1.1" fill="#d4d4d4"/><circle cx="9.8" cy="9.8" r="1.1" fill="#d4d4d4"/></svg>
<div style="position:absolute;left:903.7px;top:314px;width:337.3px;height:22.3px;background:#646464"></div>
<div class="n" style="position:absolute;left:906.7px;top:318.01px;font-size:9.2px;line-height:9.2px;color:#ececec;font-weight:normal;white-space:nowrap;">$(*var_subs)</div>
<div style="position:absolute;left:903.7px;top:341.6px;width:15px;height:14px;background:#3d4452"></div>
<div style="position:absolute;left:907.3px;top:344.41px;font-size:10.5px;line-height:10.5px;color:#4a84e0;font-weight:bold;white-space:nowrap;">$</div>
<svg style="position:absolute;left:914px;top:351px" width="4" height="3" viewBox="0 0 4 3"><path d="M0 0 L4 0 L2 2.5 Z" fill="#dddddd"/></svg>
<div style="position:absolute;left:1226px;top:342px;width:15px;height:14px;box-sizing:border-box;border:1px solid #4e4e4e;background:#383838"></div>
<svg style="position:absolute;left:1226px;top:342px" width="15" height="14" viewBox="0 0 15 14"><rect x="3" y="3" width="9.5" height="5" fill="#f4f4f4"/><path d="M7.75 4.5 L7.75 12 M5.5 6.5 L7.75 4.3 L10 6.5" stroke="#4a70b0" stroke-width="1.4" fill="none"/></svg>
<div class="n" style="position:absolute;left:845px;top:365.01px;font-size:9.2px;line-height:9.2px;color:#e6e6e6;font-weight:normal;white-space:nowrap;">Color:</div>
<svg style="position:absolute;left:880px;top:363.5px" width="12" height="12" viewBox="0 0 12 12"><path d="M0.8 6 L4.5 6 Q6 6 7.5 4.2 Q8.6 2.8 9.8 2.8" stroke="#d4d4d4" stroke-width="1.2" fill="none"/><path d="M4.5 6 Q6 6 7.5 8.2 Q8.6 9.3 9.8 9.3" stroke="#d4d4d4" stroke-width="1.2" fill="none"/><circle cx="9.8" cy="2.3" r="1.1" fill="#d4d4d4"/><circle cx="9.8" cy="9.8" r="1.1" fill="#d4d4d4"/></svg>
<div style="position:absolute;left:904.8px;top:362.5px;width:12px;height:11.3px;box-sizing:border-box;border:1.3px solid #f0f0f0;background:#000"></div>
<div class="n" style="position:absolute;left:845px;top:385.01px;font-size:9.2px;line-height:9.2px;color:#e6e6e6;font-weight:normal;white-space:nowrap;">Font:</div>
<div style="position:absolute;left:904px;top:385px;width:8px;height:8px;background:#5c5c5c"></div>
<svg style="position:absolute;left:904px;top:384px" width="9" height="9" viewBox="0 0 9 9"><path d="M1.5 4.5 L3.5 7 L7.5 1" stroke="#ececec" stroke-width="1.3" fill="none"/></svg>
<div class="n" style="position:absolute;left:916px;top:385.01px;font-size:9.2px;line-height:9.2px;color:#e6e6e6;font-weight:normal;white-space:nowrap;">Default</div>
<div class="n" style="position:absolute;left:903px;top:405.41px;font-size:9.2px;line-height:9.2px;color:#5a5a5a;font-weight:normal;white-space:nowrap;">Size:</div>
<div style="position:absolute;left:952.5px;top:402.2px;width:34.5px;height:13.8px;background:#3d3d3d"></div>
<div class="n" style="position:absolute;left:955.5px;top:405.41px;font-size:9.2px;line-height:9.2px;color:#5e5e5e;font-weight:normal;white-space:nowrap;">14px</div>
<div style="position:absolute;left:987px;top:402.2px;width:8.6px;height:13.8px;background:#444"></div>
<div class="n" style="position:absolute;left:903px;top:426.01px;font-size:9.2px;line-height:9.2px;color:#5a5a5a;font-weight:normal;white-space:nowrap;">Weight:</div>
<div style="position:absolute;left:952px;top:422.5px;width:47px;height:14.5px;box-sizing:border-box;border:1px solid #444;background:#3b3b3b;border-radius:2px"></div>
<div class="n" style="position:absolute;left:955.5px;top:426.06px;font-size:9.2px;line-height:9.2px;color:#5c5c5c;font-weight:normal;white-space:nowrap;">Inherit</div>
<svg style="position:absolute;left:988.5px;top:428.45px" width="6" height="4" viewBox="0 0 6 4"><path d="M0.3 0 L5.3 0 L2.8 3 Z" fill="#5c5c5c"/></svg>
<div class="n" style="position:absolute;left:844.4px;top:446.61px;font-size:9.2px;line-height:9.2px;color:#e6e6e6;font-weight:normal;white-space:nowrap;">Align:</div>
<div class="n" style="position:absolute;left:903px;top:446.61px;font-size:9.2px;line-height:9.2px;color:#e6e6e6;font-weight:normal;white-space:nowrap;">Horizontal:</div>
<div style="position:absolute;left:952.2px;top:442.8px;width:46.6px;height:14.4px;box-sizing:border-box;border:1px solid #525252;background:#474747;border-radius:2px"></div>
<div class="n" style="position:absolute;left:955.7px;top:446.31px;font-size:9.2px;line-height:9.2px;color:#ececec;font-weight:normal;white-space:nowrap;">Center</div>
<svg style="position:absolute;left:988.3000000000001px;top:448.7px" width="6" height="4" viewBox="0 0 6 4"><path d="M0.3 0 L5.3 0 L2.8 3 Z" fill="#c4c4c4"/></svg>
<div class="n" style="position:absolute;left:903px;top:467.01px;font-size:9.2px;line-height:9.2px;color:#e6e6e6;font-weight:normal;white-space:nowrap;">Vertical:</div>
<div style="position:absolute;left:952.2px;top:463.3px;width:47.8px;height:14.9px;box-sizing:border-box;border:1px solid #525252;background:#474747;border-radius:2px"></div>
<div class="n" style="position:absolute;left:955.7px;top:467.06px;font-size:9.2px;line-height:9.2px;color:#ececec;font-weight:normal;white-space:nowrap;">Center</div>
<svg style="position:absolute;left:989.5px;top:469.45px" width="6" height="4" viewBox="0 0 6 4"><path d="M0.3 0 L5.3 0 L2.8 3 Z" fill="#c4c4c4"/></svg>
<div class="n" style="position:absolute;left:844.4px;top:486.61px;font-size:9.2px;line-height:9.2px;color:#e6e6e6;font-weight:normal;white-space:nowrap;">Formatting:</div>
<div style="position:absolute;left:904px;top:486px;width:8px;height:8px;background:#5c5c5c"></div>
<div class="n" style="position:absolute;left:915.7px;top:486.61px;font-size:9.2px;line-height:9.2px;color:#e6e6e6;font-weight:normal;white-space:nowrap;">Word wrap</div>
<div style="position:absolute;left:904px;top:505px;width:8px;height:8px;background:#5c5c5c"></div>
<svg style="position:absolute;left:904px;top:504px" width="9" height="9" viewBox="0 0 9 9"><path d="M1.5 4.5 L3.5 7 L7.5 1" stroke="#ececec" stroke-width="1.3" fill="none"/></svg>
<div class="n" style="position:absolute;left:915.7px;top:505.51px;font-size:9.2px;line-height:9.2px;color:#e6e6e6;font-weight:normal;white-space:nowrap;">Auto size</div>
<div style="position:absolute;left:904px;top:524px;width:8px;height:8px;background:#5c5c5c"></div>
<div class="n" style="position:absolute;left:915.7px;top:524.41px;font-size:9.2px;line-height:9.2px;color:#e6e6e6;font-weight:normal;white-space:nowrap;">Scroll bar</div>
<div style="position:absolute;left:904px;top:543px;width:8px;height:8px;background:#444"></div>
<div class="n" style="position:absolute;left:915.7px;top:543.71px;font-size:9.2px;line-height:9.2px;color:#5a5a5a;font-weight:normal;white-space:nowrap;">Enable trailing ellipses</div>
<div class="n" style="position:absolute;left:844.4px;top:563.71px;font-size:9.2px;line-height:9.2px;color:#e6e6e6;font-weight:normal;white-space:nowrap;">Padding:</div>
<div style="position:absolute;left:903px;top:560px;width:24px;height:15px;background:#5f5f5f"></div>
<div class="n" style="position:absolute;left:906px;top:563.71px;font-size:9.2px;line-height:9.2px;color:#ececec;font-weight:normal;white-space:nowrap;">5</div>
<div style="position:absolute;left:927px;top:560px;width:10px;height:15px;box-sizing:border-box;border:1px solid #474747;background:#3c3c3c"></div>
<svg style="position:absolute;left:927px;top:560px" width="10" height="15" viewBox="0 0 10 15"><path d="M2.6 6.3 L5 3.5 L7.4 6.3 Z" fill="#d8d8d8"/><path d="M2.6 8.7 L5 11.5 L7.4 8.7 Z" fill="#d8d8d8"/></svg>
<div style="position:absolute;left:945.7px;top:559px;width:19px;height:16.7px;box-sizing:border-box;border:1px solid #444;background:#3a3a3a;border-radius:2px"></div>
<svg style="position:absolute;left:949px;top:562px" width="12" height="11" viewBox="0 0 12 11"><rect x="1" y="1" width="10" height="9" stroke="#d0d0d0" stroke-width="1" stroke-dasharray="2 1.5" fill="none"/></svg>
<div style="position:absolute;left:1254px;top:80px;width:10px;height:9px;background:#3a3a3a"></div>
<svg style="position:absolute;left:1256px;top:82px" width="6" height="5" viewBox="0 0 6 5"><path d="M0 4 L3 1 L6 4 Z" fill="#e0e0e0"/></svg>
<div style="position:absolute;left:1254px;top:89px;width:10px;height:486px;background:#353535"></div>
<div style="position:absolute;left:1254px;top:92px;width:10px;height:360px;box-sizing:border-box;border:1px solid #474747;background:#3b3b3b"></div>
<div style="position:absolute;left:1254.5px;top:575px;width:9.5px;height:9px;background:#3a3a3a"></div>
<svg style="position:absolute;left:1256px;top:577px" width="6" height="5" viewBox="0 0 6 5"><path d="M0 1 L6 1 L3 4 Z" fill="#e0e0e0"/></svg>
<svg style="position:absolute;left:324px;top:322px" width="3" height="12" viewBox="0 0 3 12"><path d="M1.5 0 L1.5 12" stroke="#888" stroke-width="1" stroke-dasharray="1 1"/></svg>
<svg style="position:absolute;left:821px;top:322px" width="3" height="12" viewBox="0 0 3 12"><path d="M1.5 0 L1.5 12" stroke="#888" stroke-width="1" stroke-dasharray="1 1"/></svg>
<div style="position:absolute;left:1219px;top:599px;width:53px;height:15px;box-sizing:border-box;border:1px solid #555;background:#4a4a4a;border-radius:2px"></div>
<div class="n" style="position:absolute;left:1045px;width:400px;text-align:center;top:602.61px;font-size:9.2px;line-height:9.2px;color:#ececec;font-weight:normal;white-space:nowrap;">Close</div>
<svg style="position:absolute;left:0px;top:613px" width="9" height="9" viewBox="0 0 9 9"><path d="M0 0 Q0 9 9 9 L0 9 Z" fill="#f4f4f4"/><path d="M0 0 Q0 9 9 9" stroke="#1e1e1e" stroke-width="0.8" fill="none"/></svg>
<svg style="position:absolute;left:1271px;top:613px" width="9" height="9" viewBox="0 0 9 9"><path d="M9 0 Q9 9 0 9 L9 9 Z" fill="#f4f4f4"/><path d="M9 0 Q9 9 0 9" stroke="#1e1e1e" stroke-width="0.8" fill="none"/></svg>
</div></body></html>
